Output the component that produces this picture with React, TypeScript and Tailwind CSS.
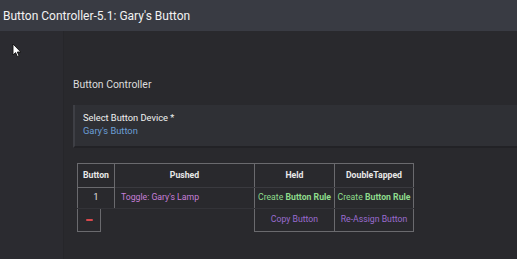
import React from "react";

const font = { fontFamily: "Roboto, 'Liberation Sans', sans-serif" };

function Cursor() {
  return (
    <svg className="absolute left-[12px] top-[43px]" width="10" height="15" viewBox="0 0 10 15">
      <path d="M1 1 L1 12 L3.6 9.6 L5.4 13.6 L7 12.9 L5.3 9 L8.8 9 Z" fill="#fff" stroke="#111" strokeWidth="0.9" />
    </svg>
  );
}

export default function App() {
  return (
    <div className="relative w-[517px] h-[259px] overflow-hidden bg-[#29292d]" style={font}>
      <div className="h-[31px] bg-[#393b43] flex items-center pl-[3px] text-[12px] text-[#f2f2f2]">
        Button Controller-5.1: Gary's Button
      </div>
      <div className="flex h-[228px]">
        <div className="w-[64px] shrink-0 bg-[#2b2b30] border-r border-[#26262a]" />
        <div className="flex-1 pl-[9px]">
          <div className="pt-[46px] h-[74px] text-[10.4px] text-[#dcdcdc]">Button Controller</div>
          <div className="h-[43px] bg-[#2f3035] border-l-2 border-[#3e3f45] border-b-2 border-b-[#222226] pl-[8px] pt-[6px] text-[9.3px] leading-[13px]">
            <div className="text-[#f0f0f0]">Select Button Device *</div>
            <div className="text-[#6c9fd6]">Gary's Button</div>
          </div>
          <div className="pt-[15px] pl-[4px]">
            <div className="w-[337px] text-[8.7px] text-[#e8e8e8] whitespace-nowrap">
              <div className="flex h-[24px] border-t border-[#6a6a6e] font-bold">
                <div className="w-[38px] border-l border-r border-[#6a6a6e] flex items-center justify-center">Button</div>
                <div className="w-[140px] border-r border-[#6a6a6e] flex items-center justify-center">Pushed</div>
                <div className="w-[80px] border-r border-[#6a6a6e] flex items-center justify-center">Held</div>
                <div className="w-[79px] border-r border-[#6a6a6e] flex items-center justify-center">DoubleTapped</div>
              </div>
              <div className="flex h-[21px] border-t border-[#3a3a3f]">
                <div className="w-[38px] border-l border-r border-[#6a6a6e] border-t border-t-[#6a6a6e] -mt-px flex items-center justify-center">1</div>
                <div className="w-[140px] border-r border-[#6a6a6e] flex items-center pl-[6px] text-[#c77fd8]">Toggle: Gary's Lamp</div>
                <div className="w-[80px] border-r border-[#6a6a6e] flex items-center justify-center text-[#8edb8c]">
                  Create&nbsp;<span className="font-bold">Button Rule</span>
                </div>
                <div className="w-[79px] border-r border-[#6a6a6e] flex items-center justify-center text-[#8edb8c]">
                  Create&nbsp;<span className="font-bold">Button Rule</span>
                </div>
              </div>
              <div className="flex h-[24px] border-t border-[#333338]">
                <div className="w-[24px] border-l border-r border-b border-[#6a6a6e] flex items-center justify-center">
                  <div className="w-[7px] h-[2px] bg-[#d9484c] rounded-[1px]" />
                </div>
                <div className="w-[153px]" />
                <div className="w-[81px] border-l border-r border-b border-[#6a6a6e] flex items-center justify-center text-[#9a6ccf]">Copy Button</div>
                <div className="w-[79px] border-r border-b border-[#6a6a6e] flex items-center justify-center text-[#9a6ccf]">Re-Assign Button</div>
              </div>
            </div>
          </div>
        </div>
      </div>
      <Cursor />
    </div>
  );
}
